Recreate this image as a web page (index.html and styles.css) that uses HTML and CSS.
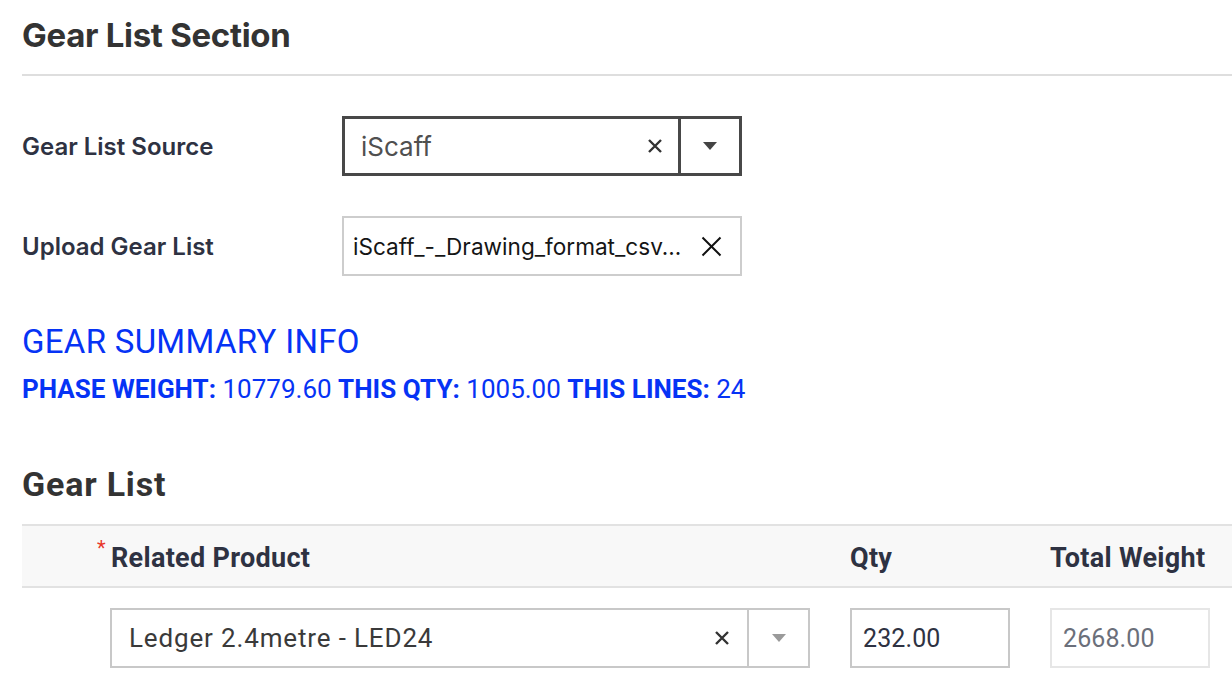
FILE: index.html
```html
<!DOCTYPE html>
<html>
<head>
<meta charset="utf-8">
<link rel="stylesheet" href="styles.css">
</head>
<body>
<div class="page">
  <div class="section-head">
    <h1 class="section-title">Gear List Section</h1>
  </div>

  <div class="form">
    <div class="form-row">
      <label class="form-label">Gear List Source</label>
      <div class="select select-dark">
        <span class="select-value">iScaff</span>
        <span class="select-clear">
          <svg width="16" height="16" viewBox="0 0 16 16"><path d="M2 2 L14 14 M14 2 L2 14" stroke="#333" stroke-width="2.4" fill="none"/></svg>
        </span>
        <span class="select-arrow">
          <svg width="14" height="8" viewBox="0 0 14 8"><path d="M0 0 H14 L7 8 Z" fill="#444"/></svg>
        </span>
      </div>
    </div>
    <div class="form-row">
      <label class="form-label">Upload Gear List</label>
      <div class="upload">
        <span class="upload-name">iScaff_-_Drawing_format_csv...</span>
        <span class="upload-clear">
          <svg width="21" height="21" viewBox="0 0 21 21"><path d="M1.5 1.5 L19.5 19.5 M19.5 1.5 L1.5 19.5" stroke="#111" stroke-width="2" fill="none"/></svg>
        </span>
      </div>
    </div>
  </div>

  <div class="summary">
    <div class="summary-title">GEAR SUMMARY INFO</div>
    <div class="summary-line"><b>PHASE WEIGHT:</b> 10779.60 <b>THIS QTY:</b> 1005.00 <b>THIS LINES:</b> 24</div>
  </div>

  <h2 class="list-title">Gear List</h2>

  <div class="table">
    <div class="thead">
      <div class="th"></div>
      <div class="th th-product"><span class="req">*</span>Related Product</div>
      <div class="th">Qty</div>
      <div class="th">Total Weight</div>
    </div>
    <div class="trow">
      <div class="td"></div>
      <div class="td">
        <div class="select select-light">
          <span class="select-value">Ledger 2.4metre - LED24</span>
          <span class="select-clear">
            <svg width="16" height="16" viewBox="0 0 16 16"><path d="M2 2 L14 14 M14 2 L2 14" stroke="#333" stroke-width="2.4" fill="none"/></svg>
          </span>
          <span class="select-arrow">
            <svg width="14" height="8" viewBox="0 0 14 8"><path d="M0 0 H14 L7 8 Z" fill="#9a9a9a"/></svg>
          </span>
        </div>
      </div>
      <div class="td"><div class="input">232.00</div></div>
      <div class="td"><div class="input input-readonly">2668.00</div></div>
    </div>
  </div>
</div>
</body>
</html>
```

FILE: styles.css
```css
* { box-sizing: border-box; }
html, body { margin: 0; padding: 0; background: #fff; }
body { font-family: Roboto, "Noto Sans", sans-serif; color: #333; }

.page { padding-left: 22px; }

.section-head {
  height: 76px;
  border-bottom: 2px solid #dedede;
  padding-top: 15px;
}
.section-title {
  margin: 0;
  font-family: Inter, Roboto, sans-serif;
  font-weight: 700;
  font-size: 33px;
  line-height: 40px;
  color: #333;
  letter-spacing: -0.3px;
}

.form { padding-top: 40px; display: flex; flex-direction: column; gap: 40px; }
.form-row { display: flex; align-items: center; height: 60px; }
.form-label {
  width: 320px;
  font-family: Inter, sans-serif;
  font-weight: 600;
  font-size: 24px;
  color: #2e3242;
}

.select {
  display: flex;
  align-items: center;
  height: 60px;
  background: #fff;
}
.select-dark { width: 400px; border: 3px solid #484848; }
.select-dark .select-value {
  flex: 1;
  padding-left: 16px;
  font-family: Inter, sans-serif;
  font-size: 26px;
  color: #505050;
}
.select-clear { width: 48px; display: flex; justify-content: center; align-items: center; }
.select-arrow {
  width: 61px;
  height: 100%;
  display: flex;
  justify-content: center;
  align-items: center;
}
.select-dark .select-clear { width: 46px; }
.select-dark .select-arrow { border-left: 3px solid #484848; }
.select-light .select-arrow { border-left: 2px solid #c8c8c8; }
.select-light .select-clear { width: 50px; }

.select-light { width: 700px; border: 2px solid #c8c8c8; }
.select-light .select-value {
  flex: 1;
  padding-left: 17px;
  font-size: 26px;
  color: #3a3a3a;
  letter-spacing: 0.85px;
}

.upload {
  width: 400px;
  height: 60px;
  border: 2px solid #cdcdcd;
  display: flex;
  align-items: center;
}
.upload-name {
  flex: 1;
  padding-left: 9px;
  font-family: Inter, sans-serif;
  font-size: 22.6px;
  color: #151515;
  white-space: nowrap;
}
.upload-clear { width: 58px; display: flex; justify-content: center; }

.summary { padding-top: 46px; color: #0633f5; }
.summary-title {
  font-size: 33px;
  line-height: 40px;
  font-weight: 400;
  letter-spacing: 0.3px;
}
.summary-line {
  margin-top: 11px;
  font-size: 26px;
  line-height: 32px;
  letter-spacing: 0;
}
.summary-line b { font-weight: 700; }

.list-title {
  margin: 0;
  padding-top: 59px;
  font-size: 34px;
  line-height: 40px;
  font-weight: 700;
  color: #333;
  letter-spacing: 0.8px;
}

.table { margin-top: 20px; }
.thead, .trow {
  display: grid;
  grid-template-columns: 88px 740px 200px 1fr;
}
.thead {
  height: 64px;
  background: #f8f8f8;
  border-top: 2px solid #e2e2e2;
  border-bottom: 2px solid #e2e2e2;
  align-items: center;
  padding-top: 3px;
}
.th {
  font-size: 27px;
  font-weight: 700;
  color: #2e3242;
  letter-spacing: 0.3px;
}
.th-product { position: relative; padding-left: 1px; }
.req {
  position: absolute;
  left: -13px;
  top: -6px;
  color: #e8372a;
  font-size: 20px;
  font-weight: 400;
}
.trow { padding-top: 20px; }
.input {
  width: 160px;
  height: 60px;
  border: 2px solid #c8c8c8;
  display: flex;
  align-items: center;
  padding-left: 11px;
  font-size: 25px;
  color: #2e3242;
  letter-spacing: 0.1px;
}
.input-readonly { border-color: #e6e6e6; color: #6b6f7a; }
```
